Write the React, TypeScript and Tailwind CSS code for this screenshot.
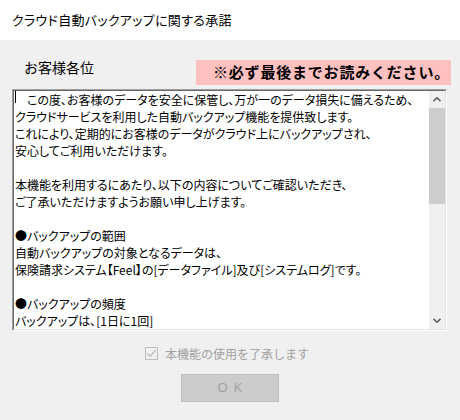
import React from 'react';

const bodyLines: string[] = [
  '　この度、お客様のデータを安全に保管し、万が一のデータ損失に備えるため、',
  'クラウドサービスを利用した自動バックアップ機能を提供致します。',
  'これにより、定期的にお客様のデータがクラウド上にバックアップされ、',
  '安心してご利用いただけます。',
  '',
  '本機能を利用するにあたり、以下の内容についてご確認いただき、',
  'ご了承いただけますようお願い申し上げます。',
  '',
  '●バックアップの範囲',
  '自動バックアップの対象となるデータは、',
  '保険請求システム【Feel】の[データファイル]及び[システムログ]です。',
  '',
  '●バックアップの頻度',
  'バックアップは、[1日に1回]',
];

const Chevron: React.FC<{ down?: boolean }> = ({ down }) => (
  <svg width="8" height="5" viewBox="0 0 8 5">
    <path
      d={down ? 'M0.5 0.8 L4 4.2 L7.5 0.8' : 'M0.5 4.2 L4 0.8 L7.5 4.2'}
      fill="none"
      stroke="#606060"
      strokeWidth="1.6"
    />
  </svg>
);

const App: React.FC = () => {
  return (
    <div className="w-[460px] h-[420px] flex flex-col bg-[#f0f0f0] font-['Noto_Sans_CJK_JP',sans-serif] text-black">
      {/* Title bar */}
      <div className="h-[40px] bg-white flex items-center pl-[12px] text-[13px] tracking-[0.3px] [font-feature-settings:'palt']">
        クラウド自動バックアップに関する承諾
      </div>

      {/* Header row */}
      <div className="flex items-start mt-[20px] h-[25px]">
        <div className="ml-[24px] mt-[-1px] text-[14px] leading-[17px]">お客様各位</div>
        <div className="ml-auto mr-[9px] w-[255px] h-[25px] bg-[#ffc0c0] flex items-center pl-[17px] text-[15px] tracking-[0.8px] font-bold whitespace-nowrap">
          ※必ず最後までお読みください。
        </div>
      </div>

      {/* Text box */}
      <div className="mt-[4px] ml-[12px] w-[435px] h-[242px] border-t border-l border-t-[#a0a0a0] border-l-[#a0a0a0] border-r border-b border-r-white border-b-white">
        <div className="h-full flex border-t border-l border-t-[#696969] border-l-[#696969] border-r border-b border-r-[#e3e3e3] border-b-[#e3e3e3] bg-white">
          <div className="relative flex-1 pl-[1px] overflow-hidden text-[12px] leading-[17px] [font-feature-settings:'palt']">
            <span className="absolute left-[1px] top-[0px] w-[1px] h-[12px] bg-black" />
            {bodyLines.map((line, i) => (
              <div key={i} className="h-[17px] whitespace-pre">
                {line}
              </div>
            ))}
          </div>
          {/* Scrollbar */}
          <div className="w-[16px] flex flex-col bg-[#f0f0f0]">
            <div className="h-[16px] flex items-center justify-center">
              <Chevron />
            </div>
            <div className="h-[96px] mt-[1px] bg-[#cdcdcd]" />
            <div className="flex-1" />
            <div className="h-[17px] flex items-center justify-center">
              <Chevron down />
            </div>
          </div>
        </div>
      </div>

      {/* Agreement checkbox */}
      <div className="flex items-center mt-[16px] pl-[145px] h-[13px]">
        <div className="w-[13px] h-[13px] border border-[#bcbcbc] bg-[#f0f0f0] flex items-center justify-center">
          <svg width="11" height="11" viewBox="0 0 11 11">
            <path d="M1.5 5.5 L4.2 8.2 L9.5 2.2" fill="none" stroke="#bcbcbc" strokeWidth="1.3" />
          </svg>
        </div>
        <span className="ml-[7px] text-[12px] text-[#a0a0a0]">本機能の使用を了承します</span>
      </div>

      {/* OK button */}
      <div className="mt-[14px] ml-[181px] w-[98px] h-[28px] bg-[#cccccc] border border-[#bfbfbf] flex items-center justify-center text-[13px] text-[#a0a0a0] tracking-[6px] pl-[6px] font-['Liberation_Sans',sans-serif]">
        OK
      </div>
    </div>
  );
};

export default App;
